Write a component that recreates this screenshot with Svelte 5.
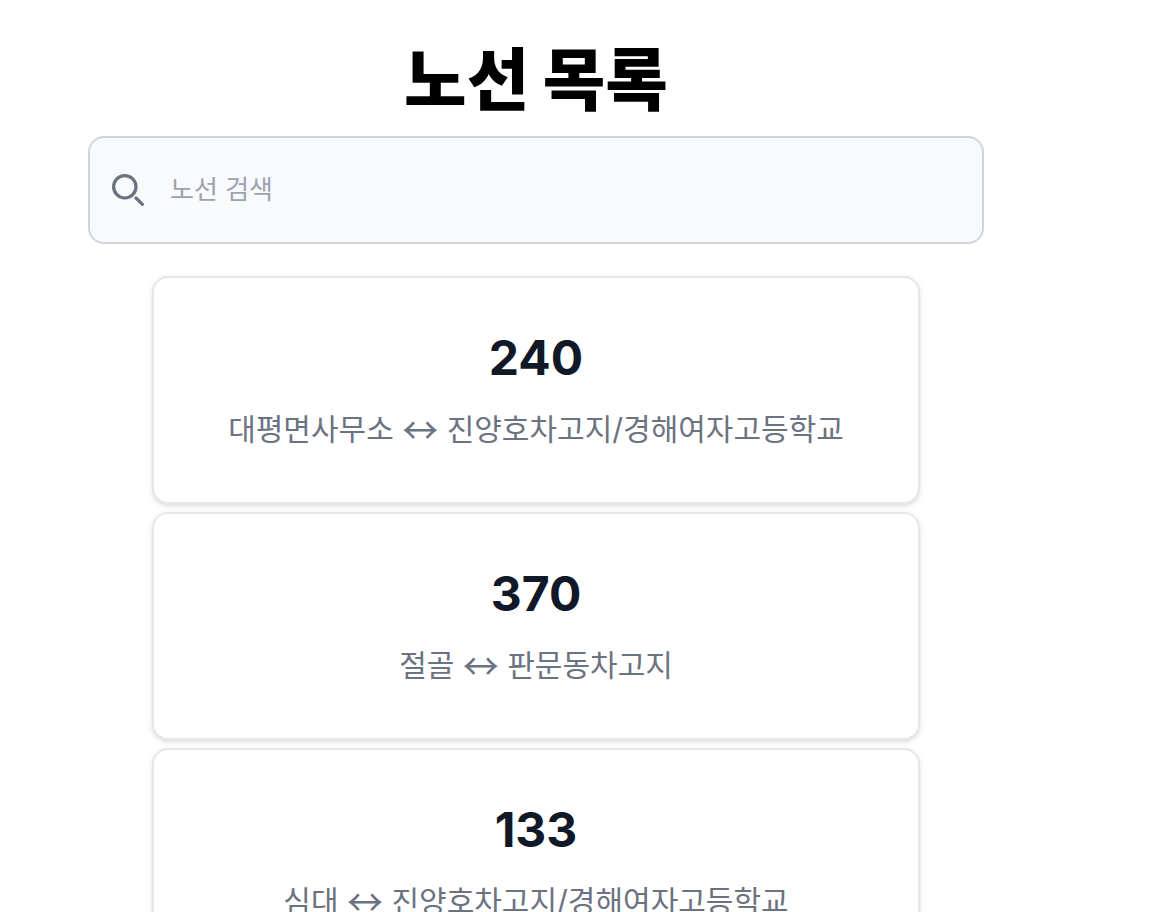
<script>
  const routes = [
    { number: '240', from: '대평면사무소', to: '진양호차고지/경해여자고등학교' },
    { number: '370', from: '절골', to: '판문동차고지' },
    { number: '133', from: '심대', to: '진양호차고지/경해여자고등학교' }
  ];
  let query = $state('');
  const shown = $derived(routes.filter((r) => `${r.number} ${r.from} ${r.to}`.includes(query.trim())));
</script>

<main>
  <h1>노선 목록</h1>
  <form role="search" onsubmit={(e) => e.preventDefault()}>
    <label for="search" aria-label="노선 검색">
      <svg viewBox="0 0 20 20" fill="none" stroke="currentColor" stroke-width="2" stroke-linecap="round" stroke-linejoin="round" aria-hidden="true">
        <path d="m19 19-4-4m0-7A7 7 0 1 1 1 8a7 7 0 0 1 14 0Z" />
      </svg>
    </label>
    <input id="search" type="search" placeholder="노선 검색" bind:value={query} />
  </form>
  <div class="list">
    {#each shown as route (route.number)}
      <a class="card" href={`#${route.number}`}>
        <h2>{route.number}</h2>
        <p>{route.from} <span class="arrow">↔</span> {route.to}</p>
      </a>
    {/each}
  </div>
</main>

<style>
  :global(body) {
    background: #fff;
    font-family: Inter, "Noto Sans CJK KR", sans-serif;
  }
  * { box-sizing: border-box; }
  main {
    padding: 32px 172px 0 88px;
    text-align: center;
  }
  h1 {
    margin: 0;
    font-size: 68px;
    line-height: 96px;
    font-weight: 900;
    color: #000;
  }
  form {
    display: flex;
    align-items: center;
    margin-top: 8px;
    height: 108px;
    padding: 0 22px;
    gap: 26px;
    border: 2px solid #d1d5db;
    border-radius: 16px;
    background: #f9fafb;
  }
  label { display: flex; color: #6b7280; }
  svg { width: 32px; height: 32px; }
  input {
    flex: 1;
    min-width: 0;
    padding: 0;
    border: 0;
    outline: 0;
    background: transparent;
    font: inherit;
    font-size: 26px;
    line-height: 40px;
    color: #111827;
  }
  input::placeholder { color: #9ca3af; opacity: 1; }
  .list {
    display: flex;
    flex-direction: column;
    gap: 8px;
    padding: 32px 64px;
  }
  .card {
    display: block;
    padding: 48px 48px 50px;
    border: 2px solid #e5e7eb;
    border-radius: 16px;
    background: #fff;
    box-shadow: 0 2px 6px rgba(0, 0, 0, 0.1), 0 2px 4px -2px rgba(0, 0, 0, 0.1);
    text-decoration: none;
  }
  h2 {
    margin: 0 0 16px;
    font-size: 48px;
    line-height: 64px;
    font-weight: 700;
    color: #111827;
  }
  p {
    margin: 0;
    font-size: 30px;
    line-height: 46px;
    color: #6b7280;
  }
  .arrow {
    font-family: "Noto Sans CJK KR", sans-serif;
    font-size: 36px;
    line-height: 24px;
    vertical-align: -4px;
  }
</style>
